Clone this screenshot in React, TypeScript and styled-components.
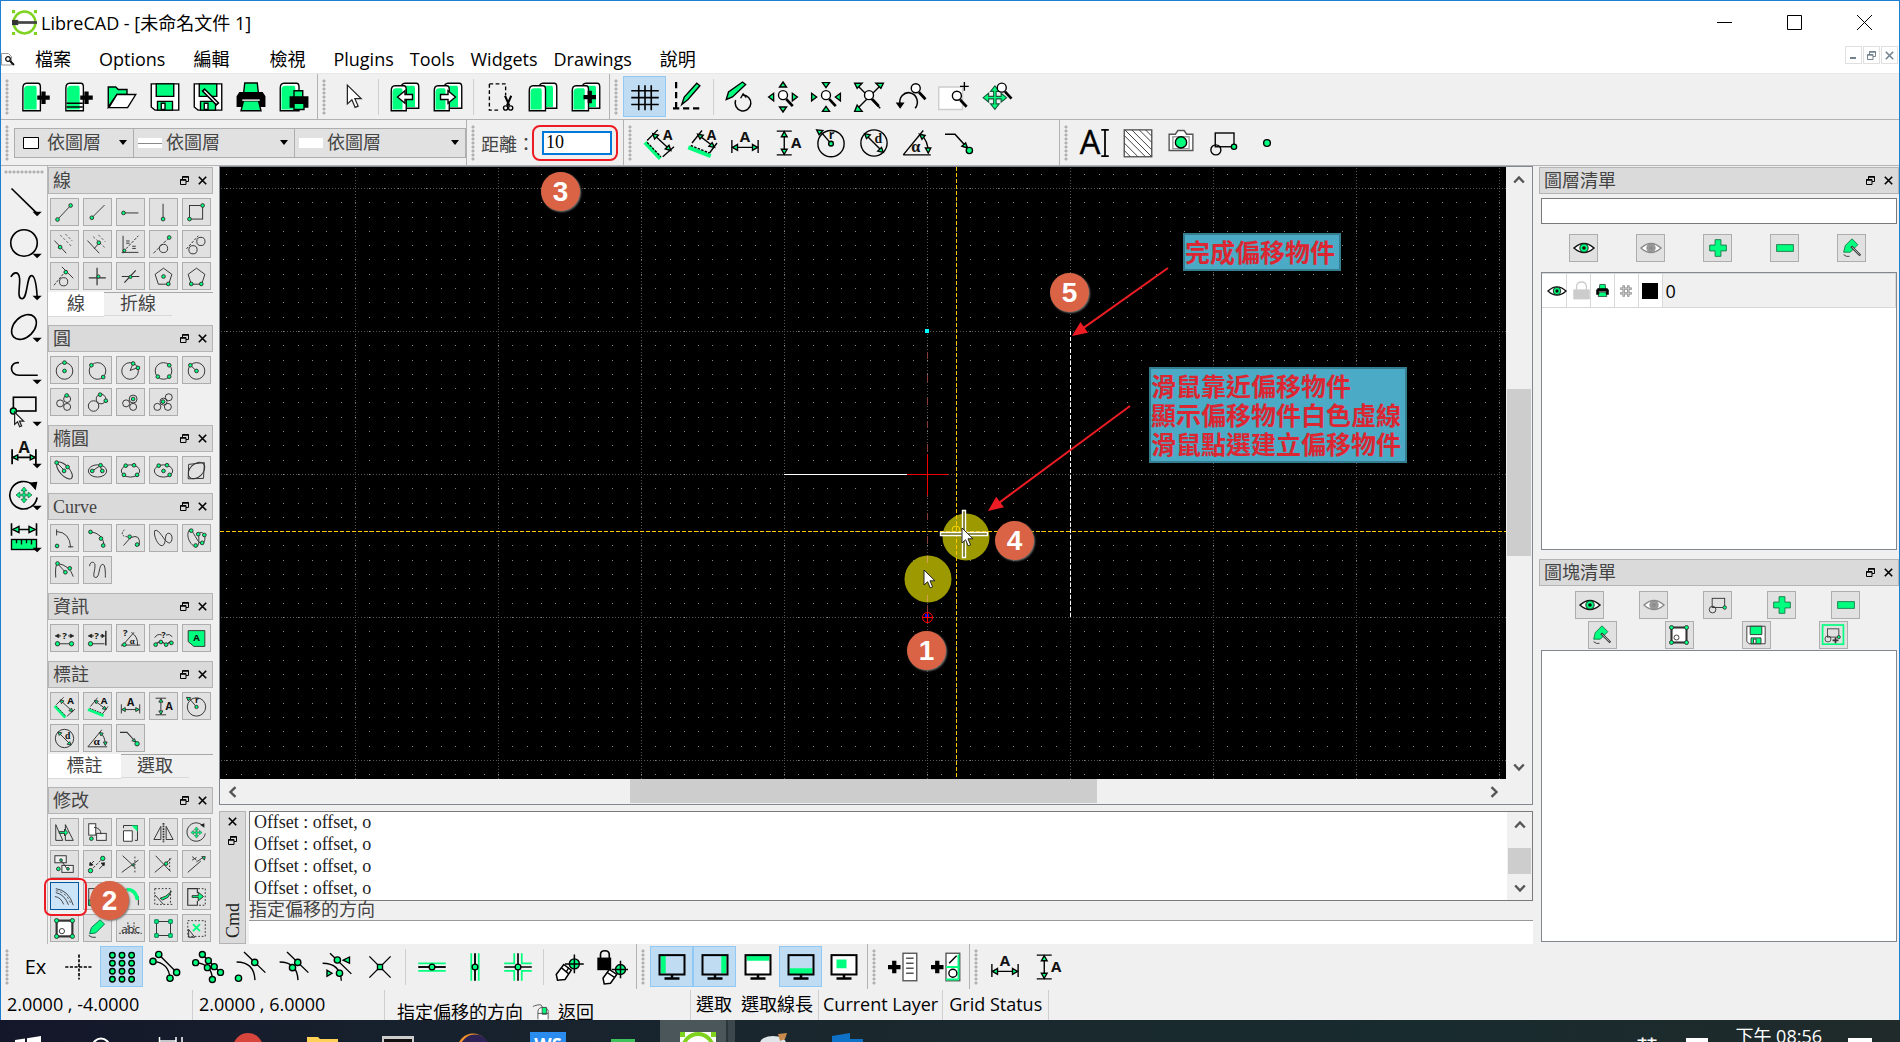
import React from 'react';
import styled, { createGlobalStyle, css } from 'styled-components';

const GREEN = '#00ff7f';
const SANS = '"Open Sans", "Noto Sans CJK TC", sans-serif';
const SERIF = '"Liberation Serif", "Noto Sans CJK TC", serif';

const GlobalStyle = createGlobalStyle`
  *, *::before, *::after { box-sizing: border-box; }
  html, body { margin: 0; background: #f0f0f0; }
  body { font-family: ${SANS}; font-size: 18px; color: #000; }
  button, input, select { font: inherit; color: inherit; margin: 0; padding: 0; border-radius: 0; }
`;

/* ---------- icon primitives (24 unit box) ---------- */

const D = ({ x, y, r = 2.1 }: { x: number; y: number; r?: number }) => (
  <circle cx={x} cy={y} r={r} fill={GREEN} />
);
const P = ({ d, ...rest }: React.SVGProps<SVGPathElement>) => <path d={d} {...rest} />;
const C = ({ x, y, r }: { x: number; y: number; r: number }) => <circle cx={x} cy={y} r={r} />;
const A = ({ x, y, s = 11, t = 'A', serif = false }: { x: number; y: number; s?: number; t?: string; serif?: boolean }) => (
  <text x={x} y={y} fontSize={s} textAnchor="middle" fill="#111" stroke="none" fontWeight={700}
    fontFamily={serif ? '"Liberation Serif", serif' : '"Open Sans", sans-serif'}>{t}</text>
);
const Pointer = ({ x, y, k = 1 }: { x: number; y: number; k?: number }) => (
  <path transform={`translate(${x} ${y}) scale(${k})`} fill="#fff" stroke="#222" strokeWidth={1 / k}
    d="M0 0v15l3.600-3.200 2.600 6 2.400-1-2.600-6h5z" />
);
const Cross = ({ k = 1 }: { k?: number }) => (
  <g transform={`translate(12 12) scale(${k})`} fill={GREEN} stroke="#175a3c" strokeWidth=".7">
    <path d="M0-7.500l2.800 3.500H.8v3.200H4v-2L7.500 0 4 2.800v-2H.8V4h2L0 7.500-2.800 4h2V.8H-4v2L-7.500 0-4-2.800v2h3.200V-4h-2z" />
  </g>
);
const Eye = ({ iris, line }: { iris: string; line: string }) => (
  <>
    <path d="M0 12q12-11 24 0q-12 11-24 0z" fill="#fff" stroke={line} strokeWidth="1.800" />
    <circle cx="12" cy="12" r="5" fill={iris} stroke={line} />
    <circle cx="12" cy="12" r="2.200" fill={line} stroke="none" />
  </>
);
const Page = ({ x, y, w = 13, h = 20 }: { x: number; y: number; w?: number; h?: number }) => (
  <>
    <path fill="#fff" d={`M${x + 3} ${y}h${w - 5}q2 0 2 3v${h - 3}h${-w}v${-h + 4}q0-4 3-4z`} />
    <path fill={GREEN} stroke="none" d={`M${x + 1} ${y + h - 1}v${-h + 6}q0-3 3-3h${w - 8}q1 0 1 2v${h - 5}z`} />
  </>
);
const Plus = ({ x, y }: { x: number; y: number }) => (
  <P d={`M${x} ${y - 5}v10M${x - 5} ${y}h10`} stroke="#000" strokeWidth="3.400" />
);
const Zoomer = ({ x, y }: { x: number; y: number }) => (
  <>
    <circle cx={x} cy={y} r="3.600" fill="#fff" />
    <P d={`M${x + 2.6} ${y + 3.2}l5.200 5.600`} strokeWidth="2.200" stroke="#000" />
  </>
);
const Monitor = ({ children }: { children: React.ReactNode }) => (
  <>
    {children}
    <rect x="2" y="2.500" width="20" height="15.500" strokeWidth="1.600" />
    <P d="M12 18v3M6 21.200h12" strokeWidth="2" />
  </>
);
const Flyout = () => <path d="M18.800 20.600h7.400l-3.700 3.600z" fill="#000" stroke="none" />;
const PENTA = 'M12 2.500l9.600 7-3.700 11.300H6.100L2.400 9.500z';
const BlockShape = () => (
  <>
    <rect x="5" y="4" width="15" height="11" />
    <circle cx="5.500" cy="17.500" r="4" />
    <D x={20} y={15} />
  </>
);

const icons: Record<string, React.ReactNode> = {
  newDoc: <><Page x={1.5} y={1} w={14} h={22} /><Plus x={18} y={12.5} /></>,
  newTpl: <><Page x={1.5} y={1} w={14} h={22} /><P d="M2 17h13M2 20h13" /><Plus x={18} y={12.5} /></>,
  open: <><path fill={GREEN} d="M1 20V4h6l2 2h7v4H8z" /><path fill="#fff" d="M1.500 20.500L8 10h15l-6.500 10.500z" /></>,
  save: <><path fill="#fff" d="M1 1.500h22v21H4L1 20z" /><path fill={GREEN} d="M5 1.500h14v10H5z" /><path fill={GREEN} d="M6 22.500v-7h12v7z" /><path fill="#fff" d="M9 17h3v5H9z" /></>,
  saveAs: <><path fill="#fff" d="M1 1.500h22v21H4L1 20z" /><path fill={GREEN} d="M5 1.500h14v10H5z" /><path fill={GREEN} d="M6 22.500v-7h12v7z" /><path fill="#fff" d="M9 17h3v5H9z" /><P d="M8 6l12 12" strokeWidth="3.600" /><P d="M9 7l10 10" stroke="#fff" strokeWidth="1" /></>,
  print: <><path fill={GREEN} d="M7 .8h10l1 9H6z" /><path fill="#000" d="M3 8.500h18l2 3v8H1v-8z" /><path fill={GREEN} d="M6 15h12l2 8H4z" /><path stroke="#fff" d="M5 14.500h14" /></>,
  preview: <><Page x={1} y={1} w={15} h={22} /><path fill={GREEN} d="M12 7h7v6h-7z" /><path fill="#000" d="M9 12h14v8H9z" /><path fill={GREEN} d="M12 17h8v5h-8z" /></>,
  arrow: <Pointer x={7.5} y={2.5} k={1} />,
  pageL: <><Page x={9} y={1} w={14} h={20} /><Page x={1} y={3} w={12} h={20} /><path fill="#fff" d="M6 12l6-5v3h6v4h-6v3z" /></>,
  pageR: <><Page x={9} y={1} w={14} h={20} /><Page x={1} y={3} w={12} h={20} /><path fill="#fff" d="M18 12l-6-5v3H6v4h6v3z" /></>,
  cut: <><P d="M3.500 1.500h13v9M3.500 1.500v21h9" strokeDasharray="3 2" /><P d="M16 11l3.500 8M21 11l-3.500 8" strokeWidth="1.600" /><C x={16.5} y={20.8} r={1.7} /><C x={20.5} y={20.8} r={1.7} /></>,
  copy: <><Page x={9} y={1} w={14} h={20} /><Page x={1} y={3} w={13} h={20} /></>,
  paste: <><Page x={9} y={1} w={14} h={20} /><Page x={1} y={3} w={13} h={20} /><Plus x={15} y={12} /></>,
  grid: <P d="M7 2.500v20M12 2.500v20M17 2.500v20M1 7h22M1 12.500h22M1 18h22" strokeWidth="1.300" />,
  draft: <><P d="M2.500 0v21M0 21h23" strokeWidth="1.800" strokeDasharray="5 3" /><path fill={GREEN} d="M7 18l2-6L19 1l2.500 2L12 14z" /></>,
  redraw: <><path fill={GREEN} d="M1 14l1.800-6L14 0l2.500 2L6 12z" /><P d="M14 10.500a6.300 6.300 0 1 1-5.500 4" strokeWidth="1.200" /><P d="M12.500 13l2-3.500 2.500 3" /></>,
  zoomIn: <><Zoomer x={12} y={10.5} /><path fill={GREEN} d="M12 0l2.800 4H9.200zM12 24l2.800-4H9.200zM.5 12l4-3v6zM23.500 12l-4-3v6z" /></>,
  zoomOut: <><Zoomer x={12} y={10.5} /><path fill={GREEN} d="M12 4.500L9.200.5h5.600zM12 19.500l-2.800 4h5.600zM4.500 12l-4-3v6zM19.500 12l4-3v6z" /></>,
  zoomAuto: <><P d="M3 3l18 18M21 3L3 21" /><Zoomer x={12} y={10.5} /><path fill={GREEN} d="M.5 1h6l-4 4zM23.500 1h-6l4 4zM.5 23.500h6l-4-5z" /></>,
  zoomPrev: <><Zoomer x={15} y={5} /><P d="M2.500 18a7 7.500 0 1 1 12 3" strokeWidth="1.200" /><path fill="#000" d="M0 17h5l-2.500 3.500z" /></>,
  zoomWin: <><path fill="#fff" stroke="#ccc" d="M-1 4h19v18H-1z" /><Zoomer x={13.5} y={11} /><P d="M19.500 0v7M16 3.500h7" /></>,
  zoomPan: <><g transform="translate(-2.500 .5)"><Cross k={1.25} /></g><Zoomer x={15} y={4.5} /></>,

  dimAligned: <><P d="M.8 11.500L13 24.500" stroke={GREEN} strokeWidth="3.200" /><P d="M2.500 11.500l11 11.500" strokeDasharray="2 1" /><P d="M2.500 10L11 1.500M15 23l9-8M7.500 5l14 13" /><path fill={GREEN} d="M7 4.500l4.500 1.200-3 3zM21.500 18l-4.500-1.200 3-3z" /><A x={19} y={9.5} /></>,
  dimLinear: <><P d="M1 15.500L19 22.500" stroke={GREEN} strokeWidth="3.200" /><P d="M3 14l15 6" strokeDasharray="2 1" /><P d="M4 12L12 2M18 20l6-8M9 5.500l12.500 9.500" /><path fill={GREEN} d="M8.500 5l4.500.8-2.600 3zM22 15.500l-4.500-.8 2.600-3z" /><A x={19.5} y={9.5} /></>,
  dimH: <><P d="M1.500 9.500v10.500M22.500 9.500v10.500M2 15.500h20" /><path fill={GREEN} d="M2 15.500l4-2.300v4.600zM22 15.500l-4-2.300v4.600z" /><A x={12} y={11.5} s={12} /></>,
  dimV: <><P d="M3 2.500h12M3 21.500h12M9 3v18" /><path fill={GREEN} d="M9 3l2.300 4H6.700zM9 21l2.300-4H6.700z" /><A x={18.5} y={16} s={12} /></>,
  dimR: <><C x={12} y={12.5} r={10.5} /><P d="M3 2l9 10.500" /><path fill={GREEN} d="M.5 1.500l5 .5-3 3.500z" /><D x={12} y={12.5} r={1.9} /><A x={12.5} y={8.5} s={10} t="r" /></>,
  dimD: <><C x={12} y={12} r={10.5} /><P d="M5 5l14 14" /><path fill={GREEN} d="M4.500 4.500l4.500 1L6 8.500zM19.500 19.500l-4.500-1 3-3z" /><A x={15.5} y={12} s={11} t="d" serif /></>,
  dimA: <><P d="M1 21.500h22M1 21.500L17 2M15 5q6 5 6 15" /><path fill={GREEN} d="M14 5l4.500 1-2.500 3zM21 20l-2.300-4h4.300z" /><A x={11} y={19.5} s={13} t="α" serif /></>,
  leader: <><P d="M0 5h8l10 11" strokeWidth="1.200" /><path fill={GREEN} d="M18 16l-4.500-1.500 3-2.500z" /><D x={19.5} y={18} r={2.5} /></>,
  text: <><text x="8" y="21" fontSize="26" textAnchor="middle" fill="#000" stroke="#000" strokeWidth=".3" fontFamily='"Open Sans", sans-serif'>A</text><P d="M17 1.500h6M17 22.500h6M20 1.500v21" strokeWidth="1.400" /></>,
  hatch: <><rect x="1" y="1.500" width="22" height="21.500" fill="#fff" stroke="#555" /><P stroke="#444" strokeWidth=".8" d="M1 18l5 5M1 12l11 11M1 6l17 17M1.500 1.500L23 23M7 1.500l16 16M13 1.500l10 10M18 1.500l5 5" /></>,
  camera: <><path fill="#fff" stroke="#555" d="M2.500 5h5L9.500 2h5l2 3h5v13h-19z" /><rect x="5.500" y="7" width="13" height="9.500" stroke="#999" /><D x={12} y={11.5} r={4.5} /></>,
  block: <BlockShape />,
  point: <D x={12} y={12} r={2.7} />,

  foLine: <><P d="M2 2l20 19.500" strokeWidth="1.300" /><Flyout /></>,
  foCircle: <><circle cx="12" cy="12" r="10.600" strokeWidth="1.300" /><Flyout /></>,
  foCurve: <><P d="M1.500 5.500C4 1 8 1 8.500 7C9 13 6 23 10.500 23C15 23 14 4.500 18 4.500C21 4.500 22 13 22.500 21" strokeWidth="1.300" /><Flyout /></>,
  foEllipse: <><ellipse cx="12" cy="12" rx="11.500" ry="8" transform="rotate(-45 12 12)" strokeWidth="1.300" /><Flyout /></>,
  foPoly: <><P d="M8 7C0 6 0 17 8 17h15" strokeWidth="1.300" /><Flyout /></>,
  foSelect: <><rect x="3.500" y="1" width="18" height="11" strokeWidth="1.300" /><D x={3.5} y={12} r={2.4} /><Pointer x={4.5} y={13} k={0.65} /><Flyout /></>,
  foDim: <><P d="M2.500 9v12M21.500 9v12M3 15.500h18" strokeWidth="1.400" /><path fill={GREEN} d="M3 15.500l4-2v4zM21 15.500l-4-2v4z" /><A x={12} y={12} s={13} /><Flyout /></>,
  foModify: <><P d="M19 4A11 11 0 1 0 22.500 14" strokeWidth="1.300" /><path fill="#000" d="M17 2.500l5-.5-1 5z" /><Cross k={0.85} /><Flyout /></>,
  foInfo: <><P d="M2 1v10M22 1v10M3 6h18" strokeWidth="1.300" /><path fill={GREEN} d="M3 6l5-2.500v5zM21 6l-5-2.500v5z" /><rect x="2" y="14" width="20" height="8" fill={GREEN} /><P d="M6 14v3M10 14v4M14 14v3M18 14v4" /><Flyout /></>,

  l2p: <><P d="M4 20L19 4" /><D x={4} y={20} /><D x={19} y={4} /></>,
  lAng: <><P d="M5.500 18L20 3.500" /><D x={5.5} y={18} /></>,
  lHor: <><P d="M4 12.500h17" /><D x={4} y={12.5} /></>,
  lVer: <><P d="M11.500 20V2" /><D x={11.5} y={19.5} /></>,
  lRect: <><rect x="4" y="4" width="15" height="15.500" /><D x={4} y={19.5} /><D x={19} y={4} /></>,
  lPar: <><P d="M.5 7.500L14 22" /><P d="M7 1l13 13M13 0l8 8" strokeDasharray="3 2" strokeWidth=".8" /><D x={7} y={15} /></>,
  lPar2: <><P d="M.5 7.500L14 22M8 17l6-7" /><P d="M7 3l14 13M13 1l8 8" strokeDasharray="3 2" strokeWidth=".8" /><D x={13.5} y={10} /></>,
  lBis: <><P d="M3.500 2v20M2 21h19" /><P d="M4 20L21 2" strokeDasharray="3 1.500" /><P d="M7 8h4M7 10.500h4M14 14h4M14 16.500h4" /><D x={5} y={19} r={1.7} /></>,
  lTanP: <><C x={12} y={16.5} r={4.7} /><P d="M.5 22L18.500 4" strokeDasharray="4 1.500" /><D x={18.5} y={4} /></>,
  lTanC: <><C x={8} y={18} r={4.7} /><C x={17} y={8.5} r={4.7} /><P d="M.5 17L14 2" strokeDasharray="3 1.500" /></>,
  lTanO: <><C x={11} y={18} r={4.7} /><P d="M0 22L14 5" strokeDasharray="3 1.500" /><P d="M9 1l13 13" /><D x={13.5} y={7} /></>,
  lOrt: <><P d="M11.500 2v20M2 13.500h19.500" strokeWidth="1.400" /><D x={13} y={12} r={1.8} /></>,
  lRel: <><P d="M2 12h20M5 19L18 5" strokeWidth="1.400" /><D x={12} y={12.5} r={1.8} /></>,
  pgC: <><P d={PENTA} /><D x={12} y={12} /><D x={17.5} y={20.5} /></>,
  pgE: <><P d={PENTA} /><D x={6} y={20.5} /><D x={17.5} y={20.5} /></>,

  cCen: <><C x={12} y={12.5} r={9.5} /><D x={12} y={12.5} /><D x={12} y={3} /></>,
  c2p: <><C x={12} y={12.5} r={9.5} /><D x={5} y={6} /><D x={18.5} y={19.5} /></>,
  cArc: <><C x={11.5} y={12.5} r={9.5} /><P d="M11.500 12l9-3.500M11.500 12L15 4" /><D x={15} y={4} /><D x={20.5} y={9} /></>,
  c3p: <><C x={12} y={12.5} r={9.5} /><D x={18.5} y={6} /><D x={5.5} y={19} /><D x={18.5} y={19} /></>,
  cRad: <><C x={12} y={12.5} r={9.5} /><P d="M5 6l7 6.500" /><D x={5} y={6} /><D x={12} y={12.5} /></>,
  cT1: <><C x={7} y={13} r={4} /><C x={15} y={8} r={4} /><C x={15} y={17} r={4} /><D x={14.5} y={4} /></>,
  cT2: <><C x={7.5} y={16} r={6} /><C x={16} y={8} r={5.5} /><D x={15} y={3} /><D x={21.5} y={10} /></>,
  cT3: <><C x={7} y={13} r={4} /><C x={15} y={8} r={4.5} /><C x={15} y={17} r={4} /><D x={15} y={8} /></>,
  cT4: <><C x={5} y={17} r={4} /><C x={12} y={11} r={4} /><C x={18} y={6} r={4} /><C x={17} y={17} r={4} /><D x={11.5} y={11} /></>,

  e1: <><ellipse cx="12" cy="12" rx="12" ry="5.500" transform="rotate(48 12 12)" /><P d="M3 3l9 9" /><D x={3} y={3} /><D x={15.5} y={8} /><D x={11.5} y={12.5} /></>,
  e2: <><ellipse cx="12" cy="12.500" rx="10.500" ry="7" /><P d="M6 12.500l9-6 2 6" /><D x={6} y={12.5} /><D x={15.5} y={6} /><D x={17.5} y={12.5} /></>,
  e3: <><ellipse cx="12" cy="12.500" rx="10.500" ry="7" /><D x={6.5} y={6.5} /><D x={16} y={6} /><D x={4.5} y={17} /><D x={19.5} y={17} /></>,
  e4: <><ellipse cx="12" cy="12.500" rx="10.500" ry="7" /><D x={6.5} y={6.5} /><D x={16} y={6} /><D x={12} y={12.5} /><D x={19} y={17} /></>,
  e5: <><P d="M3 5l18-2-1 18-17.500.5z" /><ellipse cx="12" cy="12" rx="11" ry="7.500" transform="rotate(-45 12 12)" /></>,

  k1: <><P d="M3 1.500v7M3 4q15 1 16 18M16 21.500h6" /><D x={3.5} y={20.5} /></>,
  k2: <><P d="M4 4.500q14 1 16 16.500" /><D x={4} y={4.5} /><D x={16} y={12} /><D x={18.5} y={20} /></>,
  k3: <><P d="M5 2q-7 8 6 8" strokeDasharray="2 1.500" /><P d="M4 20L12 11q12-5 10 9" /><D x={11} y={10} /><D x={19.5} y={19} /></>,
  k4: <P d="M2 3C0 8 6 22 11 20C16 18 12 6 18 6C24 7 22 18 18 17C13 16 7 0 2 3z" />,
  k5: <><P d="M4 2C-2 10 8 24 13 21C17 16 12 6 17 5C23 5 23 18 18 18C13 18 8 1 4 2z" /><D x={6} y={3} /><D x={14} y={7} /><D x={21} y={8} /><D x={18.5} y={17} /><D x={11} y={20} /></>,
  k6: <><P d="M2 20Q1 6 4 4Q18 6 22 19M4 4l9 10" /><D x={4} y={4} /><D x={18} y={9.5} /><D x={13} y={14} /></>,
  k7: <P d="M3 7C3 2 8 1 9 5C10 11 5 20 10 20C15 20 13 5 18 5C21 5 21 14 21 20" />,

  i1: <><P d="M4 18h16M3 9h5M21 9h-5" /><path fill="#111" d="M1.500 9l4-2v4zM22.500 9l-4-2v4z" /><A x={12} y={13} t="?" /><D x={4} y={18} r={2.5} /><D x={20} y={18} r={2.5} /></>,
  i2: <><P d="M4 18h16M3 9h5M19 9h-4" /><path fill="#111" d="M1.500 9l4-2v4zM20 9l-3-2v4z" /><P d="M21.500 3v17" strokeWidth="1.800" /><A x={11} y={13} t="?" /><D x={4} y={18} r={2.5} /></>,
  i3: <><P d="M1 19.500h22M2 21L16 5M13 5q8 5 7 15" /><A x={6} y={9} t="?" /><A x={14} y={18} t="α" serif s={10} /><D x={5} y={19} /></>,
  i4: <><P d="M3 18l6-3 6 4 6-4" strokeWidth="1.400" /><P d="M2 11q3-5 8-3M22 10q-3-4-7-2" /><A x={12} y={11} t="?" s={10} /><D x={3} y={19} /><D x={9} y={16} /><D x={15} y={19} /><D x={21} y={17} /></>,
  i5: <><path fill={GREEN} d="M2.500 3h19v18H9l-6.500-5.500z" /><A x={12} y={15} s={11} /></>,

  m1: <><P d="M2 3v18h8zM13 3l9 18h-9z" /><path fill={GREEN} d="M6 11h6V8l4 4-4 4v-3H6z" /></>,
  m2: <><rect x="2" y="2" width="8" height="13" fill="#fff" /><rect x="11" y="13" width="11" height="8" fill="#eee" /><P d="M8 6q8 1 8 8" /><D x={5} y={19} /></>,
  m3: <><path d="M4 10h10v12H4z" fill="#fff" /><P d="M4 4h16v17h-3M4 4v3" /><path fill={GREEN} stroke="none" d="M13 4h7v7z" /></>,
  m4: <><P d="M1 20L9 5v15zM23 20L15 5v15z" /><P d="M12 1v22" strokeDasharray="2 1" strokeWidth="2" /></>,
  m5: <><P d="M19 4A10.500 10.500 0 1 0 22 13" /><path fill="#222" stroke="none" d="M16 3l5-1.500v5z" /><Cross k={0.85} /></>,
  m6: <><rect x="1" y="2" width="13" height="8" fill="#eee" /><rect x="9" y="13" width="13" height="8" fill="#eee" /><P d="M8 7l7 10" /><D x={8} y={7} r={1.5} /><D x={5} y={17} /><D x={16} y={17} r={1.5} /></>,
  m7: <><P d="M4 19L18 5" strokeDasharray="3 1.500" /><P d="M4 12l4-4M14 17l5-5" /><path fill="#111" d="M3 13l4-.5-3.500-3zM20 10l-4 .5 3.500 3z" /><D x={4} y={19} r={2.5} /><D x={18} y={5} r={2.5} /></>,
  m8: <><P d="M3 2l14 13M2 21L21 7" /><P d="M17 3v18" strokeDasharray="2 2" /><D x={15} y={12.5} r={1.3} /></>,
  m9: <><P d="M3 2l17 18M2 21L21 5" /><D x={15} y={11} r={2} /><P d="M19 5v15" strokeDasharray="2 2" /></>,
  m10: <><P d="M2 21L17 8" /><P d="M12 9l9-6M7 3l5 4M7 7l5-3" /><path fill={GREEN} d="M18 3l4 0-1 4z" /></>,
  m11: <><P d="M2 3q15 2 20 19M2 7.500q10 2 14.500 14M1 12q7 1 10 9" strokeWidth="1" /><P d="M2 5.300q13 2 17.500 16" strokeDasharray="3 2" strokeWidth=".8" /></>,
  m12: <><rect x="2" y="3" width="19" height="19" /><path fill={GREEN} d="M2 16h6v6H2z" /></>,
  m13: <><P d="M2 22V9q2-6 9-6M21 22V12" /><P d="M8 4q10 0 12 12" stroke={GREEN} strokeWidth="4" /></>,
  m14: <><P d="M2 3v18h20M2 3h18v18" strokeDasharray="2 2" /><path fill={GREEN} d="M8 14Q15 13 21 6l-4 7-6 3z" /><P d="M2 10l10 11" /></>,
  m15: <><P d="M13 8V3H2v19h11v-5" strokeWidth="1.300" /><P d="M14 3h8v19h-8" strokeDasharray="2 2" /><path fill={GREEN} d="M7 11h7V7l6 5-6 5v-4H7z" /></>,
  m16: <><rect x="3" y="3" width="18" height="18" fill="#fff" strokeWidth="2.500" /><C x={9} y={15} r={3} /><D x={3} y={3} r={2.4} /><D x={21} y={3} r={2.4} /><D x={3} y={21} r={2.4} /><D x={21} y={21} r={2.4} /></>,
  m17: <><path fill={GREEN} stroke="#075" d="M3 18L5 11 15 2l5 5L10 17z" /><P d="M2 20q4 3 8 2" /></>,
  m18: <><text x="12" y="17" fontSize="13" textAnchor="middle" stroke="none" fill="#222" fontFamily='"Open Sans", sans-serif'>abc</text><P d="M-1 17.500h26M9 5v14M16 5v14" strokeDasharray="2 1.500" /></>,
  m19: <><rect x="4" y="4" width="16" height="16" /><path fill={GREEN} stroke="#075" d="M2 2h4v4H2zM18 2h4v4h-4zM2 18h4v4H2zM18 18h4v4h-4z" /></>,
  m20: <><rect x="2" y="3" width="20" height="18" strokeDasharray="2 2" /><P d="M8 7l8 8M16 7l-8 8" stroke={GREEN} strokeWidth="2.200" /><P d="M3 13v9h7z" /></>,

  eye: <Eye iris={GREEN} line="#111" />,
  eyeOff: <Eye iris="#9a9a9a" line="#8a8a8a" />,
  plus: <path fill={GREEN} stroke="#187a4a" d="M8.500 2h7v6.500H22v7h-6.500V22h-7v-6.500H2v-7h6.500z" />,
  minus: <rect x="2" y="8" width="20" height="8" fill={GREEN} stroke="#187a4a" />,
  attr: <><path fill={GREEN} stroke="#187a4a" d="M2 17L4 9l8-8 7 7-9 9z" /><P d="M11 10l11 11" strokeWidth="2.800" /><P d="M12 11l9 9" stroke="#fff" strokeWidth=".8" /><P d="M2 20q3 3 7 2" /></>,
  insert: <><rect x="-.5" y="0" width="25" height="23" stroke={GREEN} strokeWidth="2" /><g transform="translate(1 1) scale(.9)"><BlockShape /></g><P d="M15 15v7M11.500 18.500h7" strokeWidth="2" /></>,
  lock: <><path fill="#ccc" stroke="#ccc" d="M1 11h22v13H1z" /><P d="M5 11V7q0-7 7-7t7 7v4" stroke="#ccc" strokeWidth="1.800" /></>,
  hash: <><P d="M8 2v20M16 2v20M2 8h20M2 16h20" stroke="#888" strokeWidth="4" /><P d="M8 3v18M16 3v18M3 8h18M3 16h18" stroke="#ddd" strokeWidth="1.200" /></>,

  free: <P d="M12 2v20M1 12h22" strokeDasharray="2.500 1.200" strokeWidth="1.300" />,
  sGrid: <>{[2.6, 9, 15.4, 21.8].map((y) => [4.3, 12, 19.7].map((x) => <D key={`${x}-${y}`} x={x} y={y} r={2.2} />))}</>,
  sEnd: <><P d="M7 2l14 14M2.400 7.500q13 1 13.600 14" /><D x={7} y={2} r={2.5} /><D x={21.3} y={16.3} r={2.5} /><D x={2.4} y={7.5} r={2.5} /><D x={16} y={21} r={2.5} /></>,
  sOn: <><P d="M7.500 2l14 14M2 8.500q13 1 13.500 13" /><D x={7.5} y={2} r={2.4} /><D x={12.3} y={6.9} r={2.4} /><D x={17} y={11.7} r={2.4} /><D x={22} y={16.3} r={2.4} /><D x={2.1} y={8.5} r={2.4} /><D x={11.5} y={12.5} r={2.4} /><D x={15.5} y={22} r={2.4} /></>,
  sCen: <><P d="M6.400 0L23.500 16.500M.5 8q14 0 14.700 14.500" /><D x={15} y={8.3} r={2.5} /><D x={2} y={21} r={2.5} /></>,
  sMid: <><P d="M6.400 0L23.500 16.500M.5 8q14 0 14.700 14.500" /><D x={15} y={8.3} r={2.5} /><D x={10.8} y={12.5} r={2.5} /></>,
  sDist: <><P d="M6.400 1L23.500 17.500M.5 9q14 0 15 14" /><D x={12.3} y={6.4} r={2.5} /><D x={14} y={17} r={2.5} /><path fill={GREEN} d="M17 6.500l5-2.500v5zM8 17l-4-2.500v5z" /></>,
  sInt: <><P d="M3.500 3.500l17 17M20.500 3.500l-17 17" /><rect x="10" y="10" width="4" height="4" fill={GREEN} /></>,
  rHor: <><P d="M1 9h22M1 15h22" stroke={GREEN} strokeWidth="1.400" /><P d="M1 12h22" strokeWidth="1.500" /><D x={12} y={12} r={2.3} /></>,
  rVer: <><P d="M9 1v22M15 1v22" stroke={GREEN} strokeWidth="1.400" /><P d="M12 1v22" strokeWidth="1.500" /><D x={12} y={12} r={2.3} /></>,
  rOrt: <><P d="M1 9h8V1M15 1v8h8M1 15h8v8M15 23v-8h8" stroke={GREEN} strokeWidth="1.400" /><P d="M1 12h22M12 1v22" strokeWidth="1.300" /><D x={12} y={12} r={2.3} /></>,
  relZero: <><circle cx="15.500" cy="9.500" r="4" fill={GREEN} /><P d="M15.500 2v15M8 9.500h15" strokeWidth="1.200" /><path fill="#fff" strokeWidth="1.200" d="M1 18l6-8 6 4.500L8 22l-6 .5z" /><P d="M5 12.500l6 5M9 16l2-3.500" /></>,
  lockZero: <><rect x="0" y="5" width="10" height="9" fill="#000" /><P d="M2 5V2q0-3 3.500-3T9 2v3" strokeWidth="1.300" /><circle cx="18" cy="14" r="4" fill={GREEN} /><P d="M18 7v14M11 14h13" strokeWidth="1.200" /><path fill="#fff" strokeWidth="1.200" d="M4 21l5-7 6 4-5 7-5 .5z" /><P d="M7.500 16.500l6 4" /></>,
  vL: <Monitor><rect x="3" y="3" width="4" height="14" fill={GREEN} stroke="none" /></Monitor>,
  vR: <Monitor><rect x="17" y="3" width="4" height="14" fill={GREEN} stroke="none" /></Monitor>,
  vT: <Monitor><rect x="3" y="3" width="18" height="14" fill="#fff" stroke="none" /><rect x="3" y="2" width="18" height="5" fill={GREEN} stroke="none" /></Monitor>,
  vB: <Monitor><rect x="3" y="13" width="18" height="4.500" fill={GREEN} stroke="none" /></Monitor>,
  vF: <Monitor><rect x="3" y="3" width="18" height="14" fill="#fff" stroke="none" /><rect x="6" y="6" width="8" height="7" fill={GREEN} stroke="none" /></Monitor>,
  addCmd: <><Plus x={5} y={12} /><rect x="12" y="1" width="11" height="22" fill="#fff" stroke="#555" /><P d="M14.500 5h6M14.500 9h6M14.500 13h6M14.500 17h6" stroke="#555" /></>,
  addTool: <><Plus x={5} y={12} /><rect x="12" y="1" width="11" height="22" fill="#fff" stroke="#555" /><P d="M12 12h11M22 2v20M12 22h10" stroke={GREEN} strokeWidth="1.500" /><P d="M14.500 9l6-6" /><C x={17.5} y={17} r={3.2} /></>,
};

const Icon = ({ name, size }: { name: string; size: number }) => (
  <svg width={size} height={size} viewBox="0 0 24 24" fill="none" stroke="currentColor" strokeWidth="1.100" overflow="visible" aria-hidden="true">
    {icons[name]}
  </svg>
);

/* ---------- window frame ---------- */

const Desktop = styled.div`
  display: flex;
  flex-direction: column;
  height: 100vh;
  overflow: hidden;
`;
const Window = styled.main`
  flex: 1;
  min-height: 0;
  display: flex;
  flex-direction: column;
  background: #f0f0f0;
  border: 1px solid #1c7fd2;
  border-bottom: 0;
`;
const TitleBar = styled.header`
  height: 43px;
  display: flex;
  align-items: center;
  gap: 4px;
  padding-left: 11px;
  background: #fff;
`;
const Title = styled.h1`
  flex: 1;
  margin: 0;
  font-size: 18px;
  font-weight: 400;
  line-height: 24px;
`;
const Captions = styled.div`
  display: flex;
`;
const CaptionButton = styled.button`
  width: 70px;
  height: 43px;
  display: grid;
  place-items: center;
  border: 0;
  background: none;
`;
const MenuBar = styled.nav`
  height: 30px;
  display: flex;
  align-items: center;
  padding-right: 1px;
  background: #fff;
  border-bottom: 1px solid #e8e8e8;
`;
const MenuItem = styled.button<{ $wide?: boolean }>`
  height: 28px;
  padding: 0 ${(p) => (p.$wide ? 20 : 8)}px;
  border: 0;
  background: none;
  line-height: 28px;
`;
const MdiButtons = styled.div`
  display: flex;
  gap: 1px;
  margin-left: auto;
  align-self: flex-start;
  padding-top: 2px;
`;
const MdiButton = styled.button`
  width: 17px;
  height: 18px;
  display: grid;
  place-items: center;
  border: 1px solid #e0e0e0;
  background: #fff;
  color: #74828f;
`;

/* ---------- toolbars ---------- */

const ToolRow = styled.div<{ $line?: boolean }>`
  height: 46px;
  display: flex;
  align-items: stretch;
  border-bottom: 1px solid ${(p) => (p.$line ? '#b2b2b2' : 'transparent')};
`;
const Group = styled.div<{ $last?: boolean; $room?: number }>`
  display: flex;
  align-items: center;
  padding-right: ${(p) => p.$room ?? 2}px;
  border-right: 1px solid ${(p) => (p.$last ? 'transparent' : '#b2b2b2')};
`;
const dots = css`
  background-image: radial-gradient(circle, #b0b0b0 1px, transparent 2px);
  background-size: 4px 4px;
`;
const Grip = styled.span`
  width: 4px;
  height: 36px;
  margin: 0 5px 0 4px;
  flex: none;
  ${dots}
`;
const GripAcross = styled.span`
  width: 40px;
  height: 4px;
  margin: 4px 0 6px;
  ${dots}
`;
const ToolButton = styled.button<{ $on?: boolean }>`
  width: 43px;
  height: 41px;
  flex: none;
  display: grid;
  place-items: center;
  border: 1px solid ${(p) => (p.$on ? '#90c8f6' : 'transparent')};
  background: ${(p) => (p.$on ? '#c0dcf3' : 'transparent')};
`;
const Divider = styled.span`
  width: 1px;
  height: 36px;
  margin: 0 4px;
  background: #cfcfcf;
`;
const Combos = styled.div`
  display: flex;
  border-left: 1px solid #adadad;
`;
const Combo = styled.label<{ $width: number; $pad: number }>`
  width: ${(p) => p.$width}px;
  height: 30px;
  display: flex;
  align-items: center;
  gap: ${(p) => p.$pad}px;
  padding: 0 6px 0 ${(p) => p.$pad}px;
  border: solid #adadad;
  border-width: 1px 1px 1px 0;
  background: #e1e1e1;
  font-family: ${SERIF};
  color: #444;
`;
const ComboSelect = styled.select`
  flex: 1;
  min-width: 0;
  height: 28px;
  appearance: none;
  border: 0;
  background: none;
`;
const DistanceLabel = styled.label`
  padding-left: 1px;
  width: 52px;
  white-space: nowrap;
  font-family: ${SERIF};
  color: #444;
`;
const DistanceFrame = styled.div`
  display: flex;
  align-items: center;
  padding: 4px 4px 4px 8px;
  border: 2px solid #ed1c24;
  border-radius: 8px;
`;
const DistanceInput = styled.input`
  width: 70px;
  height: 24px;
  padding: 0 2px;
  border: 2px solid #0078d7;
  background: #fff;
  outline: 0;
  font-family: ${SERIF};
`;
const ExText = styled.span`
  font-size: 20px;
`;

/* ---------- work area ---------- */

const Work = styled.div`
  flex: 1;
  min-height: 0;
  display: flex;
`;
const ToolColumn = styled.div`
  width: 47px;
  flex: none;
  display: flex;
  flex-direction: column;
  align-items: center;
  border-right: 1px solid #b8b8b8;
`;
const ColumnButton = styled.button`
  width: 46px;
  height: 42px;
  display: grid;
  place-items: center;
  border: 0;
  background: none;
`;
const DockColumn = styled.div`
  width: 165px;
  flex: none;
  padding-top: 1px;
`;
const DockBox = styled.section<{ $tabs?: boolean }>`
  margin-bottom: ${(p) => (p.$tabs ? 8 : 9)}px;
`;
const DockHeader = styled.header`
  height: 27px;
  display: flex;
  align-items: center;
  gap: 7px;
  padding: 0 4px;
  border: 1px solid #b4b4b4;
  background: #dadada;
`;
const DockTitle = styled.h2`
  flex: 1;
  margin: 0;
  font: 400 18px/24px ${SERIF};
  color: #444;
`;
const TinyButton = styled.button`
  width: 11px;
  height: 13px;
  display: grid;
  place-items: center;
  border: 0;
  background: none;
`;
const DockGrid = styled.div`
  display: grid;
  grid-template-columns: repeat(5, 29px);
  gap: 4px;
  padding: 4px 2px 0;
`;
const Slot = styled.div`
  position: relative;
  display: flex;
`;
const SquareButton = styled.button<{ $on?: boolean }>`
  width: 29px;
  height: 28px;
  display: grid;
  place-items: center;
  border: 1px solid ${(p) => (p.$on ? '#00559b' : '#adadad')};
  background: ${(p) => (p.$on ? '#cce4f7' : '#e1e1e1')};
  color: #333;
`;
const MarkFrame = styled.span`
  position: absolute;
  inset: -4px -8px -6px -6px;
  z-index: 1;
  border: 2px solid #ed1c24;
  border-radius: 7px;
`;
const Tabs = styled.div`
  display: flex;
  align-items: flex-start;
  height: 25px;
  margin-top: 2px;
  border-top: 1px solid #a8a8a8;
`;
const Tab = styled.button<{ $on?: boolean; $width: number }>`
  width: ${(p) => p.$width}px;
  height: ${(p) => (p.$on ? 25 : 23)}px;
  margin-top: ${(p) => (p.$on ? -1 : 0)}px;
  border: 0;
  border-bottom: 1px solid #d9d9d9;
  background: ${(p) => (p.$on ? '#fff' : '#f0f0f0')};
  font-family: ${SERIF};
  line-height: 22px;
  color: #444;
`;

const Center = styled.div`
  flex: 1;
  min-width: 0;
  display: flex;
  flex-direction: column;
  margin: 0 6px;
`;
const View = styled.section`
  flex: 1;
  min-height: 0;
  display: grid;
  grid-template-columns: minmax(0, 1fr) 26px;
  grid-template-rows: minmax(0, 1fr) 25px;
  border: 1px solid #828790;
  background: #f0f0f0;
`;
const Canvas = styled.div`
  position: relative;
  overflow: hidden;
  background: #000;
`;
const Drawing = styled.svg`
  display: block;
  width: 100%;
  height: 100%;
`;
const Badge = styled.span<{ $x: number; $y: number }>`
  position: absolute;
  left: ${(p) => p.$x}px;
  top: ${(p) => p.$y}px;
  z-index: 2;
  width: 39px;
  height: 39px;
  border-radius: 50%;
  background: #d96344;
  box-shadow: 1px 1px 2px #777;
  color: #fff;
  font: 700 28px/39px "Liberation Sans", sans-serif;
  text-align: center;
`;
const Note = styled.p<{ $x: number; $y: number }>`
  position: absolute;
  left: ${(p) => p.$x}px;
  top: ${(p) => p.$y}px;
  margin: 0;
  padding: 2px 4px 3px 0;
  border: 2px solid #357d91;
  background: #4baac6;
  color: #dc2733;
  font: 700 25px/29px "Noto Sans CJK TC", sans-serif;
  white-space: pre;
`;
const Track = styled.div<{ $across?: boolean }>`
  display: flex;
  flex-direction: ${(p) => (p.$across ? 'row' : 'column')};
  background: #f0f0f0;
`;
const Space = styled.span<{ $grow: number }>`
  flex: ${(p) => p.$grow} 1 0;
`;
const Thumb = styled.span<{ $grow: number }>`
  flex: ${(p) => p.$grow} 1 0;
  margin: 0 1px 1px;
  background: #cdcdcd;
`;
const TrackButton = styled.button`
  width: 25px;
  height: 25px;
  flex: none;
  display: grid;
  place-items: center;
  border: 0;
  background: none;
`;

const CommandDock = styled.section`
  height: 133px;
  flex: none;
  display: flex;
  gap: 3px;
  margin-top: 6px;
`;
const CommandRail = styled.header`
  width: 27px;
  flex: none;
  display: flex;
  flex-direction: column;
  align-items: center;
  gap: 6px;
  padding: 3px 0 5px;
  border: 1px solid #b4b4b4;
  background: #dadada;
`;
const RailTitle = styled.h2`
  margin: auto 0 0;
  font: 400 18px/24px ${SERIF};
  writing-mode: vertical-rl;
  transform: rotate(180deg);
  color: #222;
`;
const CommandBody = styled.div`
  flex: 1;
  min-width: 0;
  display: flex;
  flex-direction: column;
`;
const History = styled.div`
  height: 90px;
  display: flex;
  border: 1px solid #7a7a7a;
  background: #fff;
`;
const Lines = styled.ol`
  flex: 1;
  display: flex;
  flex-direction: column;
  justify-content: flex-end;
  overflow: hidden;
  margin: 0;
  padding: 0 4px 1px;
  list-style: none;
  font: 18px/22px ${SERIF};
  color: #222;
`;
const Prompt = styled.label`
  height: 19px;
  font: 18px/19px ${SERIF};
  color: #444;
`;
const CommandInput = styled.input`
  width: 100%;
  height: 24px;
  border: 0;
  border-top: 1px solid #9a9a9a;
  background: #fff;
  outline: 0;
`;

const RightColumn = styled.aside`
  width: 360px;
  flex: none;
  display: flex;
  flex-direction: column;
  padding-top: 1px;
`;
const SideDock = styled.section<{ $grow: number }>`
  flex: ${(p) => p.$grow} 1 0;
  min-height: 0;
  display: flex;
  flex-direction: column;
`;
const Search = styled.input`
  height: 26px;
  margin: 4px 2px 0;
  padding: 0 4px;
  border: 1px solid #7a7a7a;
  background: #fff;
  outline: 0;
`;
const ButtonRow = styled.div<{ $gap: number; $top: number }>`
  display: flex;
  justify-content: center;
  gap: ${(p) => p.$gap}px;
  padding: ${(p) => p.$top}px 3px 0 0;
`;
const List = styled.div<{ $top: number; $bottom: number }>`
  flex: 1;
  min-height: 0;
  margin: ${(p) => p.$top}px 2px ${(p) => p.$bottom}px;
  border: 1px solid #828790;
  background: #fff;
`;
const LayerTable = styled.table`
  width: 100%;
  border-collapse: collapse;
  table-layout: fixed;
`;
const LayerCell = styled.td<{ $name?: boolean; $end?: boolean }>`
  width: ${(p) => (p.$name ? 'auto' : '24px')};
  height: 34px;
  padding: ${(p) => (p.$name ? '0 3px' : '0')};
  border: solid #d8d8d8;
  border-width: 1px 1px 1px 0;
  background: ${(p) => (p.$name ? '#f0f0f0' : '#fff')};
  font-size: 18px;
  vertical-align: middle;

  svg { display: block; margin: 0 ${(p) => (p.$end ? '0' : 'auto')} 0 auto; }
`;
const Swatch = styled.span`
  display: block;
  width: 16px;
  height: 16px;
  margin: 0 auto;
  background: #000;
`;

/* ---------- status bar and taskbar ---------- */

const StatusBar = styled.footer`
  height: 30px;
  display: flex;
  overflow: hidden;
`;
const Status = styled.div<{ $width?: number; $pad: number; $low?: boolean }>`
  ${(p) => p.$width && `width: ${p.$width}px;`}
  flex: none;
  display: flex;
  gap: 9px;
  height: 30px;
  padding: ${(p) => (p.$low ? 9 : 1)}px ${(p) => (p.$width ? 0 : p.$pad)}px 0 ${(p) => p.$pad}px;
  border-right: 1px solid #cfcfcf;
  line-height: 26px;
  white-space: nowrap;
`;
const Taskbar = styled.nav`
  height: 22px;
  flex: none;
  display: flex;
  overflow: hidden;
  background: linear-gradient(90deg, #14172a 0%, #17202d 20%, #1a282e 45%, #182b2f 75%, #202a2a 100%);
  color: #fff;
`;
const Task = styled.button<{ $width?: number; $on?: boolean }>`
  width: ${(p) => p.$width ?? 75}px;
  height: 22px;
  flex: none;
  display: flex;
  justify-content: center;
  border: 0;
  background: ${(p) => (p.$on ? 'linear-gradient(90deg, #4b565b 0 66px, #2b3639 66px 68px, #3b474b 68px)' : 'none')};
`;
const Tray = styled.div`
  display: flex;
  margin-left: auto;
  padding-right: 28px;
  gap: 26px;
`;
const Clock = styled.time`
  font-size: 18px;
  line-height: 32px;
  white-space: nowrap;
`;

/* ---------- pieces ---------- */

const FloatGlyph = () => (
  <svg width="9" height="9" viewBox="0 0 9 9" fill="none" stroke="currentColor" aria-hidden="true">
    <path d="M2.500 3V.5h6v5H6M.5 3.500h5.500v5H.5z" /><path d="M2.500 1h6M.5 4h5.500" strokeWidth="1.500" />
  </svg>
);
const CloseGlyph = () => (
  <svg width="9" height="9" viewBox="0 0 9 9" stroke="currentColor" strokeWidth="1.600" aria-hidden="true">
    <path d="M.8.8l7.400 7.400M8.200.8L.8 8.200" />
  </svg>
);
const Chevron = ({ turn }: { turn: number }) => (
  <svg width="12" height="12" viewBox="0 0 12 12" fill="none" stroke="#555" strokeWidth="2.400" aria-hidden="true">
    <path d="M1.200 8.500L6 3.500l4.800 5" transform={`rotate(${turn} 6 6)`} />
  </svg>
);
const Logo = ({ size }: { size: number }) => (
  <svg width={size} height={size} viewBox="0 0 24 24" fill="none" aria-hidden="true">
    <path fill="#7fd320" d="M0 0h3v3H0zM21 0h3v3h-3zM0 21h3v3H0zM21 21h3v3h-3z" />
    <circle cx="12" cy="12" r="10.500" stroke="#7fd320" strokeWidth="2.400" fill="#fff" />
    <path d="M0 9.500h6v5H0z" fill="#333" /><path d="M5 12h19" stroke="#444" strokeWidth="2.600" />
  </svg>
);

const Header = ({ title }: { title: string }) => (
  <DockHeader>
    <DockTitle>{title}</DockTitle>
    <TinyButton aria-label={`${title} float`}><FloatGlyph /></TinyButton>
    <TinyButton aria-label={`${title} close`}><CloseGlyph /></TinyButton>
  </DockHeader>
);

type DockProps = { title: string; tools: string[]; tabs?: [string, number][]; marked?: string };

const Dock = ({ title, tools, tabs, marked }: DockProps) => (
  <DockBox $tabs={!!tabs}>
    <Header title={title} />
    <DockGrid>
      {tools.map((t) => (
        <Slot key={t}>
          <SquareButton aria-label={t} $on={t === marked}><Icon name={t} size={21} /></SquareButton>
          {t === marked && (<><MarkFrame /><Badge $x={40} $y={-1}>2</Badge></>)}
        </Slot>
      ))}
    </DockGrid>
    {tabs && (
      <Tabs>
        {tabs.map(([label, width], i) => <Tab key={label} $on={i === 0} $width={width}>{label}</Tab>)}
      </Tabs>
    )}
  </DockBox>
);

const Tools = ({ names, on = [] }: { names: string[]; on?: string[] }) => (
  <>
    {names.map((n, i) =>
      n === '|' ? <Divider key={i} /> : (
        <ToolButton key={n} aria-label={n} $on={on.includes(n)}>
          {n === 'ex' ? <ExText>Ex</ExText> : <Icon name={n} size={30} />}
        </ToolButton>
      ),
    )}
  </>
);

const ComboBox = ({ label, width, pad, children }: { label: string; width: number; pad: number; children: React.ReactNode }) => (
  <Combo $width={width} $pad={pad}>
    {children}
    <ComboSelect aria-label={label} defaultValue="0"><option value="0">依圖層</option></ComboSelect>
    <svg width="8" height="5" viewBox="0 0 8 5" aria-hidden="true"><path d="M0 0h8L4 5z" /></svg>
  </Combo>
);

const MINOR = [0, 14, 29, 43, 57, 71, 86, 100, 114, 129];

const Arrow = ({ from, to }: { from: [number, number]; to: [number, number] }) => {
  const angle = (Math.atan2(to[1] - from[1], to[0] - from[0]) * 180) / Math.PI;
  const length = Math.hypot(to[0] - from[0], to[1] - from[1]);
  return (
    <g transform={`translate(${to[0]} ${to[1]}) rotate(${angle})`} fill="#ed1c24">
      <path d={`M${-length} 0H-12`} stroke="#ed1c24" strokeWidth="2" />
      <path d="M0 0l-15-6.500v13z" />
    </g>
  );
};

const CanvasDrawing = () => (
  <Drawing role="img" aria-label="Drawing">
    <defs>
      <pattern id="grid" x="135" y="21" width="143" height="143" patternUnits="userSpaceOnUse">
        <g fill="#858585" shapeRendering="crispEdges">
          {MINOR.map((y) => MINOR.map((x) => <rect key={`${x}-${y}`} x={x} y={y} width="1" height="1" />))}
        </g>
        <path d="M0 .5h143M.5 0v143" stroke="#565656" strokeDasharray="1 2" shapeRendering="crispEdges" />
      </pattern>
    </defs>
    <rect width="100%" height="100%" fill="url(#grid)" />
    <g shapeRendering="crispEdges" fill="none">
      <path d="M707.500 185v265" stroke="#8b3a3a" strokeDasharray="7 16" />
      <path d="M850.500 164v287" stroke="#fff" strokeDasharray="4 2" />
      <path d="M564 307.500h123" stroke="#fff" />
      <path d="M687 307.500h41M707.500 287v41" stroke="#f00000" />
      <path d="M705 162h4v4h-4z" fill="#00ffff" />
    </g>
    <circle cx="746" cy="370" r="23.500" fill="#9c9a00" />
    <circle cx="708" cy="412" r="23.500" fill="#9c9a00" />
    <path d="M707.500 389v7M707.500 428v7" stroke="#d2a050" />
    <g shapeRendering="crispEdges" stroke="#ffc800" strokeDasharray="4 2">
      <path d="M736.500 0v4000" /><path d="M0 364.500h4000" />
    </g>
    <circle cx="736" cy="363" r="4" fill="none" stroke="#ffd800" />
    <path d="M742.500 343.500h3v47h-3zM720.500 365.500h47v3h-47z" fill="#6d6c10" stroke="#fff" strokeWidth="1.400" />
    <Pointer x={742} y={361} /><Pointer x={704} y={403} />
    <path d="M705 447h4v4h-4z" fill="#0000ff" />
    <path d="M702 450.500h11M707.500 445v11" stroke="#f00" />
    <circle cx="707.500" cy="450.500" r="5" fill="none" stroke="#f00" />
    <Arrow from={[948, 101]} to={[852, 169]} />
    <Arrow from={[910, 239]} to={[768, 344]} />
  </Drawing>
);

export default function App() {
  return (
    <Desktop>
      <GlobalStyle />
      <Window>
        <TitleBar>
          <Logo size={25} />
          <Title>LibreCAD - [未命名文件 1]</Title>
          <Captions>
            <CaptionButton aria-label="Minimize"><svg width="15" height="15"><path d="M0 7.500h15" stroke="#000" /></svg></CaptionButton>
            <CaptionButton aria-label="Maximize"><svg width="15" height="15"><path d="M.5.5h14v14H.5z" fill="none" stroke="#000" /></svg></CaptionButton>
            <CaptionButton aria-label="Close"><svg width="15" height="15"><path d="M0 0l15 15M15 0L0 15" stroke="#000" /></svg></CaptionButton>
          </Captions>
        </TitleBar>

        <MenuBar>
          <svg width="14" height="14" viewBox="0 0 14 14" fill="none" aria-hidden="true">
            <path d="M.5 1.500h7l3 3V13H.5z" fill="#fff" stroke="#999" /><circle cx="7" cy="7" r="2.300" stroke="#111" strokeWidth="1.300" /><path d="M9 9l4 4" stroke="#111" strokeWidth="2" />
          </svg>
          <MenuItem $wide>檔案</MenuItem>
          <MenuItem>Options</MenuItem>
          <MenuItem $wide>編輯</MenuItem>
          <MenuItem $wide>檢視</MenuItem>
          <MenuItem>Plugins</MenuItem>
          <MenuItem>Tools</MenuItem>
          <MenuItem>Widgets</MenuItem>
          <MenuItem>Drawings</MenuItem>
          <MenuItem $wide>說明</MenuItem>
          <MdiButtons>
            <MdiButton aria-label="Minimize document"><svg width="9" height="9"><path d="M1 7h6" stroke="#74828f" strokeWidth="2" /></svg></MdiButton>
            <MdiButton aria-label="Restore document"><FloatGlyph /></MdiButton>
            <MdiButton aria-label="Close document"><CloseGlyph /></MdiButton>
          </MdiButtons>
        </MenuBar>

        <ToolRow $line>
          <Group><Grip /><Tools names={['newDoc', 'newTpl', 'open', 'save', 'saveAs', 'print', 'preview']} /></Group>
          <Group><Grip /><Tools names={['arrow', '|', 'pageL', 'pageR', '|', 'cut', 'copy', 'paste']} /></Group>
          <Group $last><Grip /><Tools names={['grid', 'draft', '|', 'redraw', 'zoomIn', 'zoomOut', 'zoomAuto', 'zoomPrev', 'zoomWin', 'zoomPan']} on={['grid']} /></Group>
        </ToolRow>

        <ToolRow $line>
          <Group $room={0}>
            <Grip />
            <Combos>
              <ComboBox label="Color" width={119} pad={8}>
                <svg width="16" height="12"><path d="M.5.5h15v11H.5z" fill="#fff" stroke="#000" /></svg>
              </ComboBox>
              <ComboBox label="Width" width={161} pad={4}>
                <svg width="24" height="10"><path d="M0 5h24" stroke="#fff" strokeWidth="10" /><path d="M0 5.500h24" stroke="#888" /></svg>
              </ComboBox>
              <ComboBox label="Line type" width={171} pad={4}>
                <svg width="24" height="10"><path d="M0 5h24" stroke="#fff" strokeWidth="10" /></svg>
              </ComboBox>
            </Combos>
          </Group>
          <Group $room={5}>
            <Grip />
            <DistanceLabel htmlFor="distance">距離：</DistanceLabel>
            <DistanceFrame><DistanceInput id="distance" defaultValue="10" autoFocus /></DistanceFrame>
          </Group>
          <Group $room={78}><Grip /><Tools names={['dimAligned', 'dimLinear', 'dimH', 'dimV', 'dimR', 'dimD', 'dimA', 'leader']} /></Group>
          <Group $last><Grip /><Tools names={['text', 'hatch', 'camera', 'block', 'point']} /></Group>
        </ToolRow>

        <Work>
          <ToolColumn>
            <GripAcross />
            {['foLine', 'foCircle', 'foCurve', 'foEllipse', 'foPoly', 'foSelect', 'foDim', 'foModify', 'foInfo'].map((n) => (
              <ColumnButton key={n} aria-label={n}><Icon name={n} size={30} /></ColumnButton>
            ))}
          </ToolColumn>

          <DockColumn>
            <Dock title="線" tabs={[['線', 56], ['折線', 68]]}
              tools={['l2p', 'lAng', 'lHor', 'lVer', 'lRect', 'lPar', 'lPar2', 'lBis', 'lTanP', 'lTanC', 'lTanO', 'lOrt', 'lRel', 'pgC', 'pgE']} />
            <Dock title="圓" tools={['cCen', 'c2p', 'cArc', 'c3p', 'cRad', 'cT1', 'cT2', 'cT3', 'cT4']} />
            <Dock title="橢圓" tools={['e1', 'e2', 'e3', 'e4', 'e5']} />
            <Dock title="Curve" tools={['k1', 'k2', 'k3', 'k4', 'k5', 'k6', 'k7']} />
            <Dock title="資訊" tools={['i1', 'i2', 'i3', 'i4', 'i5']} />
            <Dock title="標註" tabs={[['標註', 73], ['選取', 68]]}
              tools={['dimAligned', 'dimLinear', 'dimH', 'dimV', 'dimR', 'dimD', 'dimA', 'leader']} />
            <Dock title="修改" marked="m11"
              tools={Array.from({ length: 20 }, (_, i) => `m${i + 1}`)} />
          </DockColumn>

          <Center>
            <View>
              <Canvas>
                <CanvasDrawing />
                <Note $x={963} $y={66}>完成偏移物件</Note>
                <Note $x={929} $y={200}>{'滑鼠靠近偏移物件\n顯示偏移物件白色虛線\n滑鼠點選建立偏移物件'}</Note>
                <Badge $x={687} $y={464}>1</Badge>
                <Badge $x={321} $y={5}>3</Badge>
                <Badge $x={775} $y={354}>4</Badge>
                <Badge $x={830} $y={106}>5</Badge>
              </Canvas>
              <Track>
                <TrackButton aria-label="Scroll up"><Chevron turn={0} /></TrackButton>
                <Space $grow={197} /><Thumb $grow={167} /><Space $grow={197} />
                <TrackButton aria-label="Scroll down"><Chevron turn={180} /></TrackButton>
              </Track>
              <Track $across>
                <TrackButton aria-label="Scroll left"><Chevron turn={-90} /></TrackButton>
                <Space $grow={385} /><Thumb $grow={467} /><Space $grow={384} />
                <TrackButton aria-label="Scroll right"><Chevron turn={90} /></TrackButton>
              </Track>
            </View>

            <CommandDock>
              <CommandRail>
                <TinyButton aria-label="Cmd close"><CloseGlyph /></TinyButton>
                <TinyButton aria-label="Cmd float"><FloatGlyph /></TinyButton>
                <RailTitle>Cmd</RailTitle>
              </CommandRail>
              <CommandBody>
                <History>
                  <Lines>
                    {[1, 2, 3, 4].map((n) => <li key={n}>Offset : offset, o</li>)}
                  </Lines>
                  <Track>
                    <TrackButton aria-label="History up"><Chevron turn={0} /></TrackButton>
                    <Space $grow={11} /><Thumb $grow={27} />
                    <TrackButton aria-label="History down"><Chevron turn={180} /></TrackButton>
                  </Track>
                </History>
                <Prompt htmlFor="command">指定偏移的方向</Prompt>
                <CommandInput id="command" />
              </CommandBody>
            </CommandDock>
          </Center>

          <RightColumn>
            <SideDock $grow={392}>
              <Header title="圖層清單" />
              <Search aria-label="Layer filter" />
              <ButtonRow $gap={38} $top={10}>
                {['eye', 'eyeOff', 'plus', 'minus', 'attr'].map((n) => (
                  <SquareButton key={n} aria-label={`layer ${n}`}><Icon name={n} size={20} /></SquareButton>
                ))}
              </ButtonRow>
              <List $top={10} $bottom={9}>
                <LayerTable>
                  <tbody>
                    <tr>
                      <LayerCell $end><Icon name="eye" size={18} /></LayerCell>
                      <LayerCell $end><Icon name="lock" size={17} /></LayerCell>
                      <LayerCell><Icon name="print" size={13} /></LayerCell>
                      <LayerCell><Icon name="hash" size={14} /></LayerCell>
                      <LayerCell><Swatch /></LayerCell>
                      <LayerCell $name>0</LayerCell>
                    </tr>
                  </tbody>
                </LayerTable>
              </List>
            </SideDock>
            <SideDock $grow={385}>
              <Header title="圖塊清單" />
              <ButtonRow $gap={35} $top={5}>
                {['eye', 'eyeOff', 'block', 'plus', 'minus'].map((n) => (
                  <SquareButton key={n} aria-label={`block ${n}`}><Icon name={n} size={20} /></SquareButton>
                ))}
              </ButtonRow>
              <ButtonRow $gap={48} $top={2}>
                {['attr', 'm16', 'save', 'insert'].map((n) => (
                  <SquareButton key={n} aria-label={`block ${n}`}><Icon name={n} size={20} /></SquareButton>
                ))}
              </ButtonRow>
              <List $top={1} $bottom={2} />
            </SideDock>
          </RightColumn>
        </Work>

        <ToolRow>
          <Group><Grip /><Tools names={['ex', 'free', 'sGrid', 'sEnd', 'sOn', 'sCen', 'sMid', 'sDist', 'sInt', '|', 'rHor', 'rVer', 'rOrt', '|', 'relZero', 'lockZero']} on={['sGrid']} /></Group>
          <Group><Grip /><Tools names={['vL', 'vR', 'vT', 'vB', 'vF']} on={['vL', 'vR', 'vB']} /></Group>
          <Group><Grip /><Tools names={['addCmd', 'addTool']} /></Group>
          <Group $last><Grip /><Tools names={['dimH', 'dimV']} /></Group>
        </ToolRow>

        <StatusBar>
          <Status $width={192} $pad={6}>2.0000 , -4.0000</Status>
          <Status $width={192} $pad={6}>2.0000 , 6.0000</Status>
          <Status $width={306} $pad={12} $low>
            <span>指定偏移的方向</span>
            <svg width="17" height="22" viewBox="0 0 20 22" fill="none" stroke="#444" aria-hidden="true">
              <path d="M7 22v-9q0-5 6-5t6 5v9" fill="#fff" /><path d="M12 8h5v8h-5z" fill={GREEN} /><path d="M7 15h12M12 8q0-4-5-3t-6 2" />
            </svg>
            <span>返回</span>
          </Status>
          <Status $pad={5}><span>選取</span><span>選取線長</span></Status>
          <Status $pad={4}>Current Layer</Status>
          <Status $pad={6}>Grid Status</Status>
        </StatusBar>
      </Window>

      <Taskbar>
        <Task aria-label="Start" $width={60}><svg width="30" height="22"><path d="M0 20l10-1.500V22H0zM12 18.200L26 16v6H12z" fill="#fff" /></svg></Task>
        <Task aria-label="Search"><svg width="30" height="22"><circle cx="18" cy="27" r="8.500" fill="none" stroke="#fff" strokeWidth="2" /></svg></Task>
        <Task aria-label="Task view"><svg width="30" height="22"><path d="M1.500 17v5M18 17v5M1 21h17M24 17v5" stroke="#fff" strokeWidth="1.500" /></svg></Task>
        <Task aria-label="Recorder"><svg width="30" height="22"><circle cx="15" cy="28" r="15" fill="#d8453c" /></svg></Task>
        <Task aria-label="Explorer"><svg width="34" height="22"><path d="M1 17h11l2 2h18v4H1z" fill="#ffd257" /></svg></Task>
        <Task aria-label="Terminal"><svg width="34" height="22"><path d="M1 16h32v6H1z" fill="#ccc" /><path d="M3 19h28v3H3z" fill="#111" /></svg></Task>
        <Task aria-label="Eclipse"><svg width="34" height="22"><circle cx="17" cy="29" r="15.500" fill="#f0902a" /><circle cx="19" cy="29.500" r="15" fill="#2c2255" /></svg></Task>
        <Task aria-label="WPS"><svg width="36" height="22"><path d="M0 12h36v10H0z" fill="#2b8cf0" /><text x="18" y="31" fontSize="18" fontWeight="700" textAnchor="middle" fill="#fff" fontFamily='"Open Sans", sans-serif'>WS</text></svg></Task>
        <Task aria-label="Notes"><svg width="26" height="22"><path d="M1 19h24v3H1z" fill="#3ec05a" /></svg></Task>
        <Task aria-label="LibreCAD" $on><svg width="36" height="22"><path d="M0 12h36v10H0z" fill="#fff" /><path d="M0 12h5v5H0zM31 12h5v5h-5z" fill="#7fd320" /><circle cx="18" cy="29" r="15" fill="none" stroke="#7fd320" strokeWidth="4" /></svg></Task>
        <Task aria-label="Paint"><svg width="34" height="22"><ellipse cx="17" cy="23" rx="13" ry="7" fill="#dfe6ea" /><path d="M22 14l9-1-2 6-5 2z" fill="#c98b4d" /></svg></Task>
        <Task aria-label="Outlook"><svg width="34" height="22"><path d="M1 16l18-3v9H1zM19 19h13v3H19z" fill="#0f72c9" /></svg></Task>
        <Tray>
          <svg width="24" height="22" aria-hidden="true"><text x="12" y="36" fontSize="22" textAnchor="middle" fill="#fff" fontFamily='"Noto Sans CJK TC", sans-serif'>英</text></svg>
          <svg width="24" height="22" aria-hidden="true"><path d="M1 18h22v4H1z" fill="#fff" /></svg>
          <Clock>下午 08:56</Clock>
          <svg width="24" height="22" aria-hidden="true"><path d="M0 18h24v4H0z" fill="#fff" /></svg>
        </Tray>
      </Taskbar>
    </Desktop>
  );
}
